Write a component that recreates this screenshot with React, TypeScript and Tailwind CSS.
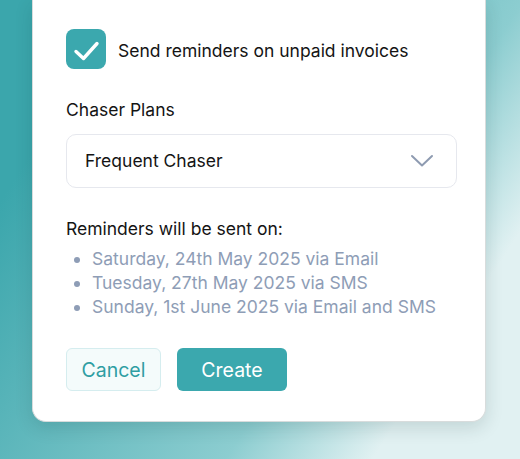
import React from "react";

export default function App() {
  return (
    <div
      className="w-[520px] h-[459px] overflow-hidden bg-[linear-gradient(123deg,#3ba6ac_16%,#8ccdd0_64%,#e1f1f2_82%)]"
      style={{ fontFamily: "Inter, 'Noto Sans', sans-serif" }}
    >
      <div className="ml-[32px] w-[454px] bg-white border border-t-0 border-[#d8dcdc] rounded-b-[14px] shadow-[0_6px_18px_rgba(0,40,45,0.14)] pl-[33px] pr-[28px] pt-[29px] pb-[30px]">
        <div className="flex items-center gap-[12px]">
          <div className="w-[40px] h-[40px] rounded-[8px] bg-[#3ba8ae] flex items-center justify-center shrink-0">
            <svg width="40" height="40" viewBox="0 0 40 40" fill="none">
              <polyline
                points="10,22.5 17.5,29.5 31,14.5"
                stroke="white"
                strokeWidth="3.4"
                strokeLinecap="round"
                strokeLinejoin="round"
              />
            </svg>
          </div>
          <span className="text-[17.5px] leading-[24px] text-[#141414] pt-[3px]">
            Send reminders on unpaid invoices
          </span>
        </div>

        <div className="mt-[29px] text-[17.5px] leading-[24px] text-[#141414]">Chaser Plans</div>

        <div className="mt-[12px] h-[54px] rounded-[10px] border border-[#e6e8ee] flex items-center justify-between pl-[18px] pr-[22px]">
          <span className="text-[17.5px] leading-[24px] text-[#141414]">Frequent Chaser</span>
          <svg width="24" height="14" viewBox="0 0 24 14" fill="none">
            <polyline
              points="2,2 12,11.5 22,2"
              stroke="#8e9bb1"
              strokeWidth="2"
              strokeLinecap="round"
              strokeLinejoin="round"
            />
          </svg>
        </div>

        <div className="mt-[29px] text-[17.5px] leading-[24px] text-[#141414]">Reminders will be sent on:</div>
        <ul className="mt-[6px] list-disc pl-[26px] text-[17.5px] leading-[24px] text-[#8e9db6] marker:text-[#8e9db6]">
          <li>Saturday, 24th May 2025 via Email</li>
          <li>Tuesday, 27th May 2025 via SMS</li>
          <li>Sunday, 1st June 2025 via Email and SMS</li>
        </ul>

        <div className="mt-[29px] flex gap-[16px]">
          <button className="w-[95px] h-[43px] rounded-[6px] bg-[#f4fbfb] border border-[#d5edef] text-[#2f9ea3] text-[19.5px] pt-[2px]">
            Cancel
          </button>
          <button className="w-[110px] h-[43px] rounded-[6px] bg-[#3ba8ae] text-white text-[19.5px] pt-[2px]">
            Create
          </button>
        </div>
      </div>
    </div>
  );
}
